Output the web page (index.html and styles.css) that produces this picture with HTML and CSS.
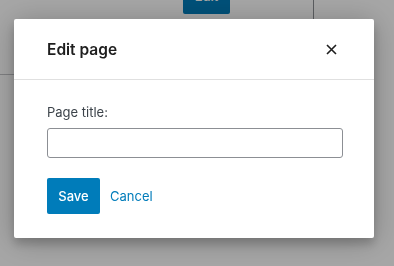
FILE: index.html
```html
<!DOCTYPE html>
<html lang="en">
<head>
<meta charset="utf-8">
<title>Edit page</title>
<link rel="stylesheet" href="styles.css">
</head>
<body>
<div class="page">
  <div class="page-side"></div>
  <div class="page-main">
    <button class="page-edit">Edit</button>
  </div>
  <div class="page-col"></div>
</div>
<div class="overlay">
  <div class="modal" role="dialog" aria-labelledby="modal-title">
    <div class="modal-header">
      <h1 class="modal-title" id="modal-title">Edit page</h1>
      <button class="modal-close" aria-label="Close">
        <svg width="11" height="11" viewBox="0 0 11 11" aria-hidden="true"><path d="M1 1 L10 10 M10 1 L1 10" stroke="#1e1e1e" stroke-width="1.6" fill="none"/></svg>
      </button>
    </div>
    <div class="modal-body">
      <label class="field-label" for="title">Page title:</label>
      <input class="field-input" id="title" type="text">
      <div class="actions">
        <button class="btn-primary">Save</button>
        <button class="btn-link">Cancel</button>
      </div>
    </div>
  </div>
</div>
</body>
</html>
```

FILE: styles.css
```css
html, body {
  margin: 0;
  padding: 0;
  height: 100%;
}
body {
  background: #ffffff;
  font-family: Inter, "Noto Sans", sans-serif;
  overflow: hidden;
}
.page {
  display: flex;
  align-items: flex-start;
  height: 100%;
}
.page-side {
  width: 14px;
  height: 74px;
  border-bottom: 1px solid #c3c4c7;
}
.page-main {
  width: 299px;
  padding-left: 169px;
  box-sizing: border-box;
}
.page-edit {
  display: block;
  margin-top: -22px;
  width: 47px;
  height: 36px;
  background: #007cba;
  color: #fff;
  border: 0;
  border-radius: 2px;
  font: 500 13px Inter, sans-serif;
}
.page-col {
  border-left: 1px solid #8c8f94;
  height: 40px;
  flex: 1;
}
.overlay {
  position: fixed;
  inset: 0;
  background: rgba(0, 0, 0, 0.35);
  padding: 19px 20px 0 14px;
}
.modal {
  width: 360px;
  height: 219px;
  background: #fff;
  border-radius: 2px;
  box-shadow: 0 3px 30px rgba(0, 0, 0, 0.25), 0 6px 10px rgba(0, 0, 0, 0.18);
  box-sizing: border-box;
}
.modal-header {
  height: 60px;
  display: flex;
  align-items: center;
  justify-content: space-between;
  padding: 0 37px 0 33px;
  border-bottom: 1px solid #e0e0e0;
}
.modal-title {
  margin: 0;
  padding-top: 1px;
  font-size: 15.5px;
  font-weight: 600;
  color: #1e1e1e;
}
.modal-close {
  border: 0;
  background: none;
  padding: 0;
  width: 11px;
  height: 11px;
  display: flex;
}
.modal-body {
  padding: 22px 31px 0 33px;
  display: flex;
  flex-direction: column;
}
.field-label {
  font-size: 13px;
  color: #3c434a;
  line-height: 20px;
}
.field-input {
  margin-top: 6px;
  width: 296px;
  height: 30px;
  box-sizing: border-box;
  border: 1px solid #8c8f94;
  border-radius: 3px;
}
.actions {
  margin-top: 20px;
  display: flex;
  align-items: center;
  gap: 10px;
}
.btn-primary {
  width: 53px;
  height: 36px;
  background: #007cba;
  color: #fff;
  border: 0;
  border-radius: 2px;
  font: 500 13px Inter, sans-serif;
}
.btn-link {
  border: 0;
  background: none;
  padding: 0;
  color: #007cba;
  font: 400 13px Inter, sans-serif;
}
```
